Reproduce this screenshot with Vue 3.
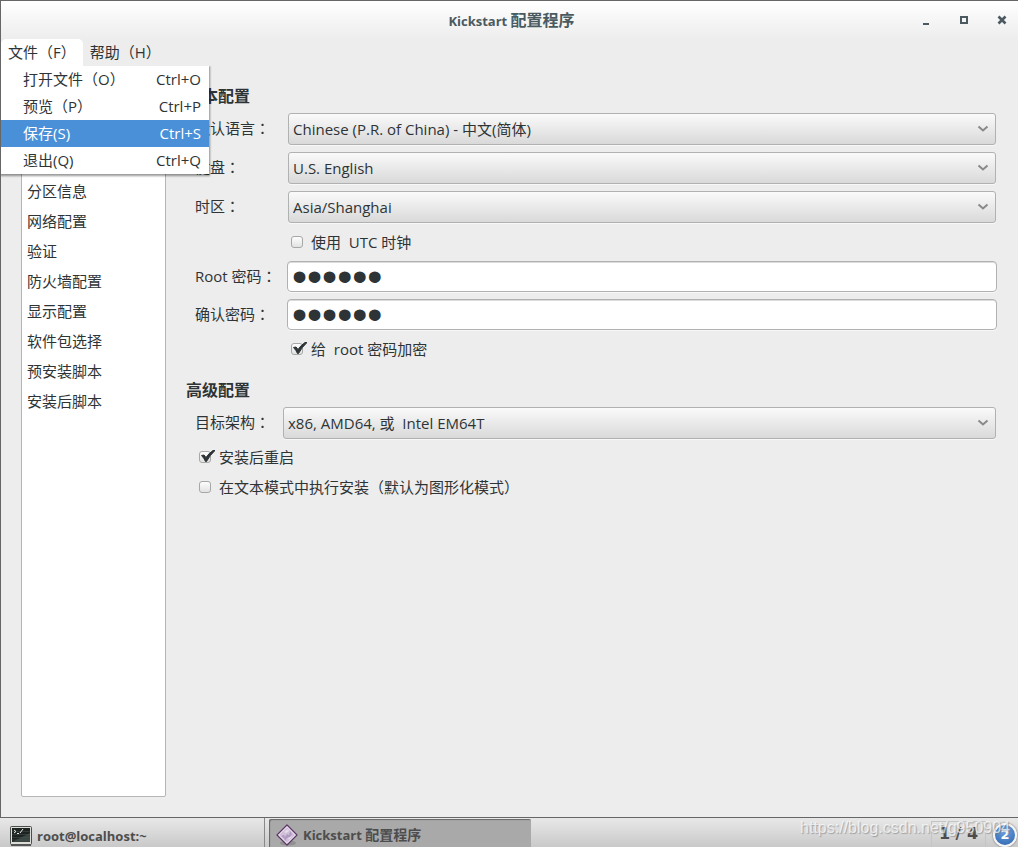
<script setup>
import { ref } from 'vue'

const menuItems = [
  { label: '打开文件（O）', key: 'Ctrl+O' },
  { label: '预览（P）', key: 'Ctrl+P' },
  { label: '保存(S)', key: 'Ctrl+S', active: true },
  { label: '退出(Q)', key: 'Ctrl+Q' },
]

const sections = [
  '分区信息', '网络配置', '验证', '防火墙配置',
  '显示配置', '软件包选择', '预安装脚本', '安装后脚本',
]

const combos = [
  { id: 'lang', label: '默认语言', value: 'Chinese (P.R. of China) - 中文(简体)' },
  { id: 'keyboard', label: '键盘', value: 'U.S. English' },
  { id: 'timezone', label: '时区', value: 'Asia/Shanghai' },
]

const utc = ref(false)
const rootPassword = ref('secret')
const confirmPassword = ref('secret')
const encrypt = ref(true)
const reboot = ref(true)
const textMode = ref(false)
</script>

<template>
  <div class="desktop">
    <div class="window">
      <header class="titlebar">
        <h1 class="title">Kickstart <span class="title-cjk">配置程序</span></h1>
        <div class="controls">
          <button type="button" aria-label="最小化">
            <svg width="12" height="12" viewBox="0 0 12 12"><path d="M3 9h6v2H3z" fill="#4a5a60" /></svg>
          </button>
          <button type="button" aria-label="最大化">
            <svg width="12" height="12" viewBox="0 0 12 12"><path d="M3 3h6v6H3z" fill="none" stroke="#4a5a60" stroke-width="2" /></svg>
          </button>
          <button type="button" aria-label="关闭">
            <svg width="12" height="12" viewBox="0 0 12 12"><path d="M2.5 2.500l7 7M9.500 2.500l-7 7" fill="none" stroke="#4a5a60" stroke-width="2.600" /></svg>
          </button>
        </div>
      </header>

      <nav class="menubar">
        <div class="menu-root">
          <button type="button" class="menu-title open">文件（F）</button>
          <div class="menu">
            <button v-for="m in menuItems" :key="m.key" type="button" class="menu-item" :class="{ active: m.active }">
              <span>{{ m.label }}</span><span>{{ m.key }}</span>
            </button>
          </div>
        </div>
        <button type="button" class="menu-title">帮助（H）</button>
      </nav>

      <main class="content">
        <ul class="sidebar">
          <li v-for="s in sections" :key="s">{{ s }}</li>
        </ul>

        <form class="form" @submit.prevent>
          <h2>基本配置</h2>
          <div class="fields">
            <div v-for="c in combos" :key="c.id" class="row">
              <label :for="c.id">{{ c.label }}<span class="colon">：</span></label>
              <div class="combo">
                <select :id="c.id"><option>{{ c.value }}</option></select>
                <svg class="arrow" width="12" height="8" viewBox="0 0 12 8"><path d="M1.500 1.500L6 5.500L10.500 1.500" /></svg>
              </div>
            </div>
            <label class="check nested"><input v-model="utc" type="checkbox" />
              <svg class="tick" viewBox="0 0 16 14"><path d="M2.500 6.500L5 6L7 8.500Q10 4 14 1.500L16 1.500Q11 6 7.500 12.500L6.500 12.500Q5 9 2.500 6.500z" /></svg>
              <span>使用&nbsp; UTC 时钟</span></label>
            <div class="row">
              <label for="pw">Root 密码<span class="colon">：</span></label>
              <input id="pw" v-model="rootPassword" class="password" type="password" />
            </div>
            <div class="row">
              <label for="pw2">确认密码<span class="colon">：</span></label>
              <input id="pw2" v-model="confirmPassword" class="password" type="password" />
            </div>
            <label class="check nested"><input v-model="encrypt" type="checkbox" />
              <svg class="tick" viewBox="0 0 16 14"><path d="M2.500 6.500L5 6L7 8.500Q10 4 14 1.500L16 1.500Q11 6 7.500 12.500L6.500 12.500Q5 9 2.500 6.500z" /></svg>
              <span>给&nbsp; root 密码加密</span></label>
          </div>

          <h2 class="second">高级配置</h2>
          <div class="fields">
            <div class="row narrow">
              <label for="arch">目标架构<span class="colon">：</span></label>
              <div class="combo">
                <select id="arch"><option>x86, AMD64, 或&nbsp; Intel EM64T</option></select>
                <svg class="arrow" width="12" height="8" viewBox="0 0 12 8"><path d="M1.500 1.500L6 5.500L10.500 1.500" /></svg>
              </div>
            </div>
            <div class="checks">
              <label class="check"><input v-model="reboot" type="checkbox" />
                <svg class="tick" viewBox="0 0 16 14"><path d="M2.500 6.500L5 6L7 8.500Q10 4 14 1.500L16 1.500Q11 6 7.500 12.500L6.500 12.500Q5 9 2.500 6.500z" /></svg>
                <span>安装后重启</span></label>
              <label class="check"><input v-model="textMode" type="checkbox" />
                <svg class="tick" viewBox="0 0 16 14"><path d="M2.500 6.500L5 6L7 8.500Q10 4 14 1.500L16 1.500Q11 6 7.500 12.500L6.500 12.500Q5 9 2.500 6.500z" /></svg>
                <span>在文本模式中执行安装（默认为图形化模式）</span></label>
            </div>
          </div>
        </form>
      </main>
    </div>

    <footer class="taskbar">
      <button type="button" class="task">
        <svg width="22" height="20" viewBox="0 0 22 20">
          <rect x="0.500" y="0.500" width="21" height="18" rx="1" fill="#dcdcd8" stroke="#4c4e4b" />
          <rect x="2" y="2" width="18" height="14" fill="#1d2321" />
          <path d="M2 16L20 7v9z" fill="#3a4542" />
          <path d="M2 5.500h18M2 8.500h18M2 11.500h18M2 14h18" stroke="#4a5552" stroke-width="0.500" />
          <path d="M4 4l2 1.500L4 7M7 7.500h2M10 7l3-4" fill="none" stroke="#e8ecea" />
          <path d="M1 19h20" stroke="#555" stroke-width="2" />
        </svg>
        <span>root@localhost:~</span>
      </button>
      <button type="button" class="task pressed">
        <svg width="22" height="22" viewBox="0 0 22 22">
          <ellipse cx="12" cy="19" rx="8" ry="2.500" fill="#777" opacity="0.500" />
          <path d="M11 1L21 11L11 21L1 11z" fill="#cfc0d8" stroke="#5c3566" stroke-width="1.200" stroke-linejoin="round" />
          <path d="M11 2.700L19.300 11L11 19.300L2.700 11z" fill="none" stroke="#efe6f3" />
          <path d="M5 12l3-1 1 2 2-3 2 1 1-4 2 3-2 3-3 1-2 3-1-3z" fill="#b09abf" />
          <path d="M8 8l4-3 1 2-3 2zM12 14l4-2-3 4z" fill="#e6dbea" />
        </svg>
        <span>Kickstart <span class="task-cjk">配置程序</span></span>
      </button>
      <div class="tray">
        <span class="pager">1 / 4</span>
        <span class="badge">2</span>
      </div>
      <span class="watermark">https://blog.csdn.net/g950904</span>
    </footer>
  </div>
</template>

<style>
html, body { margin: 0; background: #ededed; }
</style>

<style scoped>
* { box-sizing: border-box; }
.desktop {
  display: flex;
  flex-direction: column;
  height: 100vh;
  overflow: hidden;
  color: #2e3436;
  font: 15px/20px "Open Sans", "Noto Sans CJK SC", sans-serif;
}
button, input, select { font: inherit; color: inherit; margin: 0; }
button { border: 0; padding: 0; background: none; text-align: left; }
.window {
  flex: 1;
  min-height: 0;
  display: flex;
  flex-direction: column;
  border-top: 1px solid #666;
  border-left: 1px solid #666;
  background: #ededed;
}
.titlebar {
  position: relative;
  display: flex;
  align-items: center;
  justify-content: center;
  height: 38px;
  padding-left: 4px;
  background: linear-gradient(#ffffff, #ededed);
}
.title { margin: 0; font-size: 13px; line-height: 20px; font-weight: 700; color: #4a5a60; }
.title-cjk { font-size: 16px; }
.controls { position: absolute; right: 10px; top: 13px; display: flex; gap: 26px; }
.controls button { height: 12px; line-height: 0; }

.menubar { display: flex; height: 27px; }
.menu-root { position: relative; }
.menu-title { height: 27px; padding: 0 7px 2px; white-space: nowrap; }
.menu-title.open { background: #fff; border-radius: 5px 5px 0 0; }
.menu {
  position: absolute;
  top: 100%;
  left: 0;
  z-index: 2;
  width: 208px;
  background: #fff;
  box-shadow: 0 1px 2px 1px rgba(0, 0, 0, 0.4);
  clip-path: inset(0 -4px -4px 0);
}
.menu-item {
  display: flex;
  justify-content: space-between;
  align-items: center;
  width: 100%;
  height: 27px;
  padding: 0 8px 2px 22px;
}
.menu-item.active { background: #4a90d9; color: #fff; }

.content { flex: 1; min-height: 0; display: flex; gap: 20px; padding: 20px 21px 20px 20px; }
.sidebar {
  width: 145px;
  margin: 0;
  padding: 89px 5px 0;
  list-style: none;
  background: #fff;
  border: 1px solid #b4b6b6;
  border-radius: 2px;
}
.sidebar li { height: 30px; line-height: 30px; }

.form { flex: 1; min-width: 0; }
h2 { margin: 0 0 7px; font-size: 16px; line-height: 20px; font-weight: 700; }
h2.second { margin-top: 19px; }
.fields { display: flex; flex-direction: column; gap: 7px; padding-left: 9px; }
.row { display: grid; grid-template-columns: 92px 1fr; align-items: center; white-space: nowrap; }
.row.narrow { grid-template-columns: 87px 1fr; }
.row label { padding-bottom: 2px; }
.colon { font-family: "Noto Sans CJK TC", sans-serif; }
.combo { position: relative; margin: 0 1px; }
.combo select {
  display: block;
  width: 100%;
  height: 32px;
  padding: 0 30px 0 4px;
  appearance: none;
  border: 1px solid #b0b2b2;
  border-radius: 3px;
  background: linear-gradient(#fafafa, #d9d9d9);
  box-shadow: 0 1px 0 #f8f8f8;
}
.arrow { position: absolute; right: 7px; top: 12px; fill: none; stroke: #888a88; stroke-width: 2; pointer-events: none; }
.password {
  width: 100%;
  height: 31px;
  padding: 0 4px;
  border: 1px solid #b0b2b2;
  border-radius: 4px;
  background: #fff;
  box-shadow: inset 0 1px 0 #dcdcdc, 0 1px 0 #f8f8f8;
  font: 43px/29px "Liberation Sans", sans-serif;
}
.checks { display: flex; flex-direction: column; gap: 6px; margin-top: -1px; }
.check { position: relative; display: flex; align-items: center; gap: 8px; height: 24px; padding-left: 4px; white-space: pre; }
.check.nested { padding-left: 96px; }
.check input {
  flex: none;
  width: 12px;
  height: 12px;
  appearance: none;
  border: 1px solid #a6a8a8;
  border-radius: 3px;
  background: linear-gradient(#fdfdfd, #e2e2e2);
}
.tick { flex: none; width: 16px; height: 14px; margin: -2px 0 0 -20px; fill: #2e3436; stroke: #2e3436; stroke-width: 1; visibility: hidden; }
.check span { margin-left: -4px; }
input:checked + .tick { visibility: visible; }

.taskbar {
  position: relative;
  display: flex;
  gap: 4px;
  height: 30px;
  border-top: 1px solid #666;
  background: linear-gradient(#e8e8e8, #c9c9c9);
  color: #4d4d4d;
}
.task {
  display: flex;
  align-items: center;
  gap: 5px;
  width: 265px;
  padding: 6px 10px 0;
  border-right: 1px solid #888;
  font-size: 13px;
  font-weight: 700;
  white-space: nowrap;
}
.task.pressed {
  width: 262px;
  margin-top: 1px;
  padding: 4px 7px 0;
  border: 0;
  border-radius: 2px 2px 0 0;
  background: #a9a9a9;
  box-shadow: inset 1px 1px 1px #666;
}
.task-cjk { font-size: 14px; }
.tray { display: flex; align-items: flex-start; gap: 7px; margin-left: auto; padding: 3px 1px 0 0; }
.pager {
  width: 55px;
  height: 27px;
  padding-top: 2px;
  border: 1px solid #c4c4c4;
  text-align: center;
  font: 700 16px/20px "DejaVu Sans", sans-serif;
}
.badge {
  width: 24px;
  height: 24px;
  margin-top: 2px;
  border: 2px solid #f4f4f4;
  border-radius: 50%;
  background: radial-gradient(circle at 50% 30%, #6fa3e0, #2a62ac);
  box-shadow: 0 0 2px #555;
  color: #fff;
  text-align: center;
  font: 700 13px/20px "DejaVu Sans", sans-serif;
}
.watermark {
  position: absolute;
  right: 8px;
  top: 0;
  font: 16px/20px "Liberation Sans", sans-serif;
  color: rgba(255, 255, 255, 0.7);
  text-shadow: 1px 1px 1px rgba(120, 120, 120, 0.6);
  pointer-events: none;
}
</style>
